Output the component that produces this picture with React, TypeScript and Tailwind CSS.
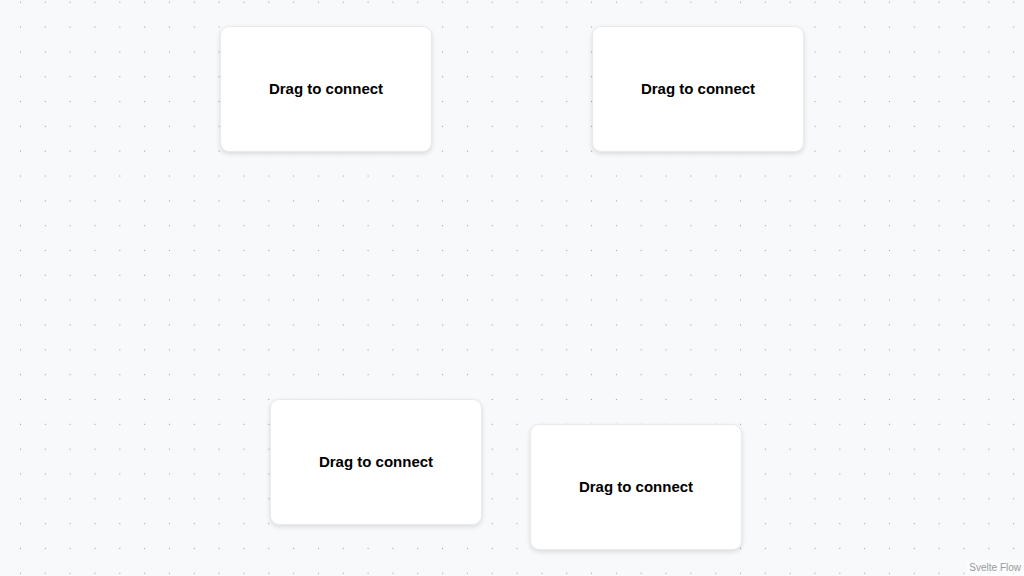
import React from "react";

type FlowNode = { id: string; x: number; y: number; label: string };

const nodes: FlowNode[] = [
  { id: "1", x: 220, y: 26, label: "Drag to connect" },
  { id: "2", x: 592, y: 26, label: "Drag to connect" },
  { id: "3", x: 270, y: 399, label: "Drag to connect" },
  { id: "4", x: 530, y: 424, label: "Drag to connect" },
];

function NodeCard({ node }: { node: FlowNode }) {
  return (
    <div
      className="absolute flex h-[126px] w-[212px] items-center justify-center rounded-[9px] border border-[#e8eaee] bg-white shadow-[0_2px_5px_rgba(0,0,0,0.12)]"
      style={{ left: node.x, top: node.y }}
    >
      <span className="text-[15px] font-bold text-black [font-family:'Liberation_Sans',Arial,sans-serif]">
        {node.label}
      </span>
    </div>
  );
}

export default function App() {
  return (
    <div className="relative h-[576px] w-full overflow-hidden bg-[#f7f9fb] [font-family:'Liberation_Sans',Arial,sans-serif]">
      {/* dotted background */}
      <div className="absolute inset-0 bg-[radial-gradient(circle,#9a9ca3_0.75px,transparent_1px)] bg-[length:24.83px_24.83px] bg-[position:8.1px_-10.2px]" />
      {nodes.map((n) => (
        <NodeCard key={n.id} node={n} />
      ))}
      <div className="absolute bottom-0 right-0 bg-[rgba(255,255,255,0.5)] px-[3px] py-[2px] text-[10px] leading-[12px] text-[#999]">
        Svelte Flow
      </div>
    </div>
  );
}
